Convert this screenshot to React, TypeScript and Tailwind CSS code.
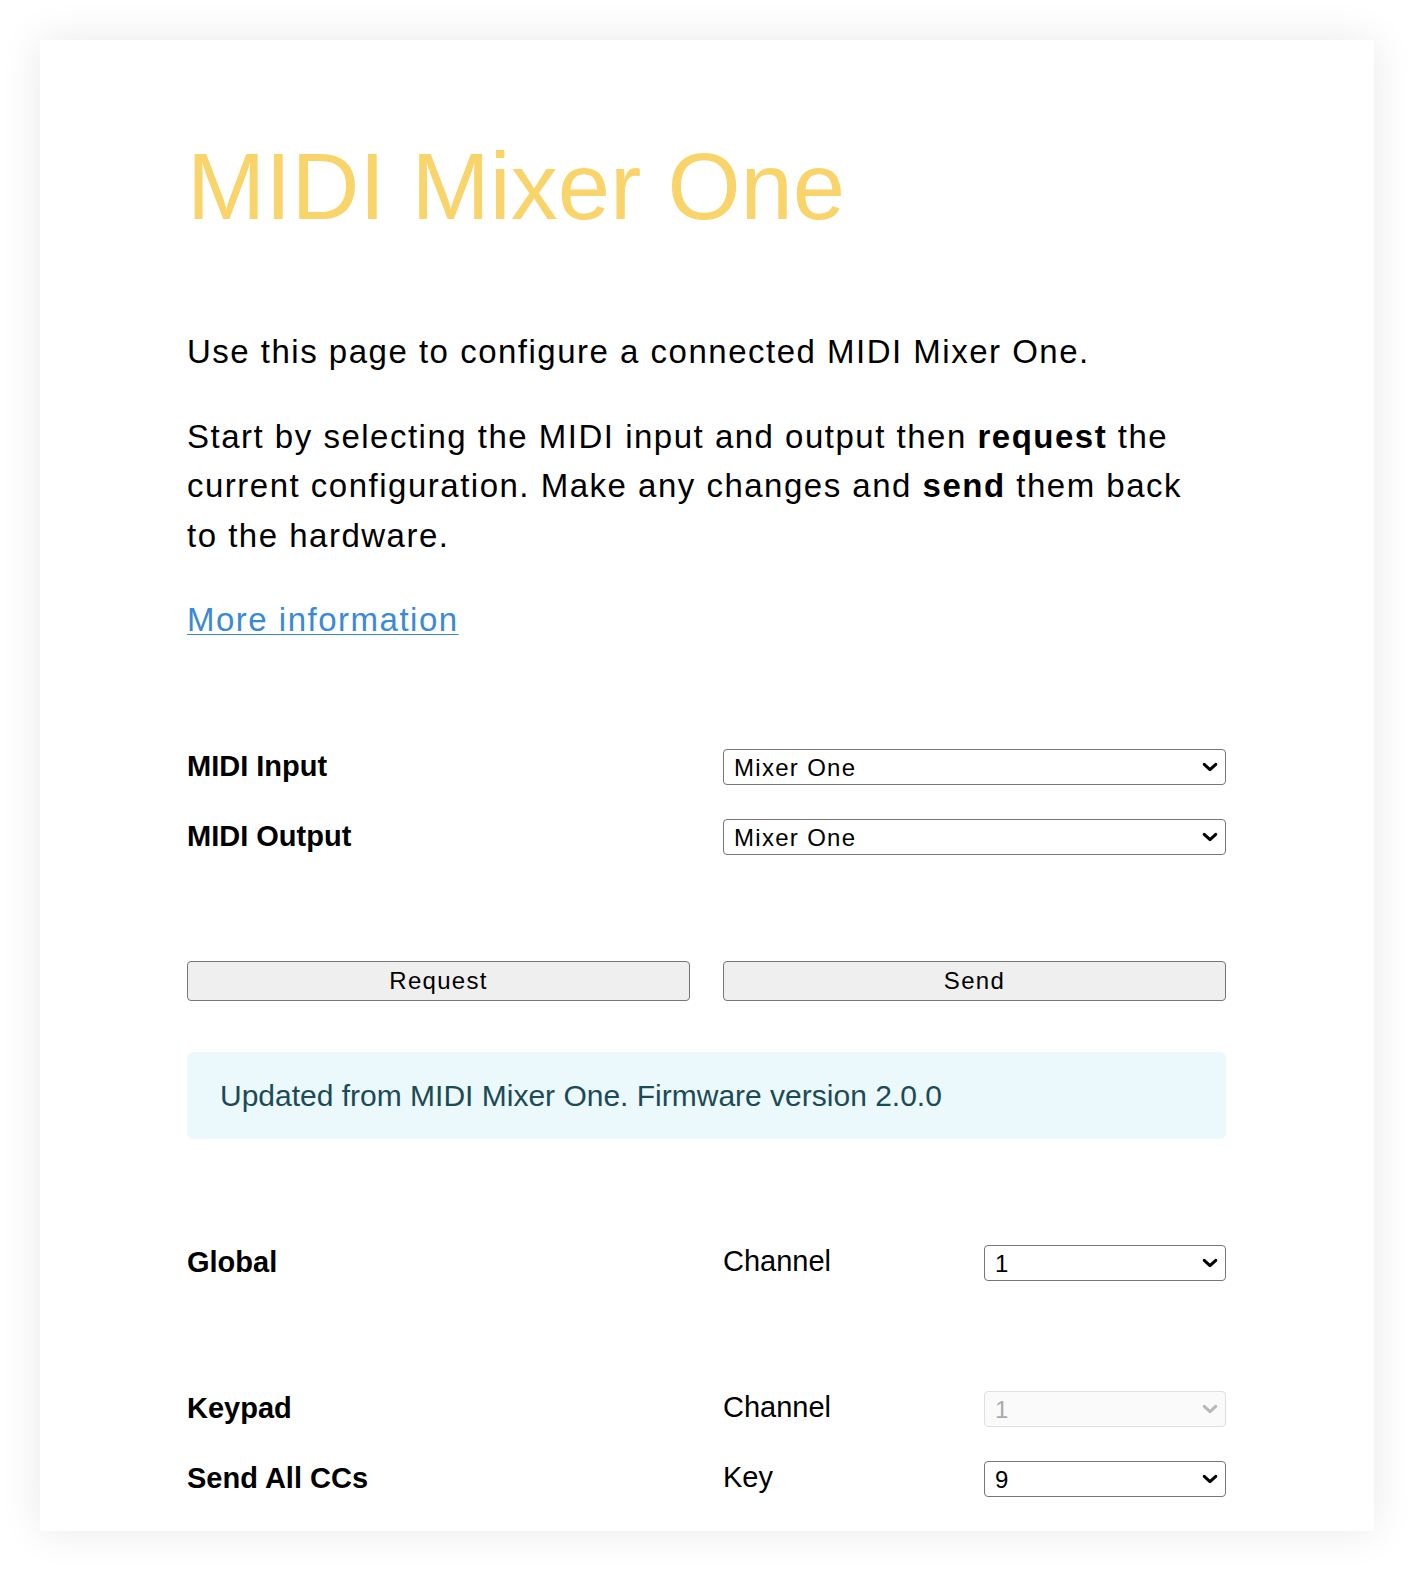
import type { ReactNode } from 'react'

const font = { fontFamily: '"Liberation Sans", Arial, sans-serif' }

function Chevron({ disabled }: { disabled?: boolean }) {
  return (
    <svg
      viewBox="0 0 18 11"
      className="pointer-events-none absolute right-[8px] top-1/2 h-[10px] w-[16px] -translate-y-1/2"
      fill="none"
      stroke={disabled ? '#b8b8b8' : '#000'}
      strokeWidth="3.4"
      strokeLinecap="round"
      strokeLinejoin="round"
    >
      <path d="M2.5 2.5 L9 8.5 L15.5 2.5" />
    </svg>
  )
}

function Select({ value, options, disabled }: { value: string; options: string[]; disabled?: boolean }) {
  return (
    <div className="relative h-[36px] w-full">
      <select
        defaultValue={value}
        disabled={disabled}
        className={
          disabled
            ? 'h-full w-full appearance-none rounded-[4px] border border-[#e0e0e0] bg-[#fafafa] pl-[10px] text-[24px] tracking-[1.3px] text-[#ababab] outline-none'
            : 'h-full w-full appearance-none rounded-[4px] border border-[#767676] bg-white pl-[10px] text-[24px] tracking-[1.3px] text-black outline-none'
        }
        style={font}
      >
        {options.map((option) => (
          <option key={option} value={option}>
            {option}
          </option>
        ))}
      </select>
      <Chevron disabled={disabled} />
    </div>
  )
}

function Label({ children }: { children: ReactNode }) {
  return <div className="flex h-[36px] items-center text-[29px] font-bold text-black">{children}</div>
}

function SettingRow({ label, field, value, options, disabled }: { label: string; field: string; value: string; options: string[]; disabled?: boolean }) {
  return (
    <>
      <Label>{label}</Label>
      <div className="flex h-[36px] items-center justify-between">
        <span className="-mt-[3px] text-[29px] leading-none text-black">{field}</span>
        <div className="w-[242px]">
          <Select value={value} options={options} disabled={disabled} />
        </div>
      </div>
    </>
  )
}

const channels = Array.from({ length: 16 }, (_, index) => String(index + 1))

function App() {
  return (
    <div className="min-h-screen bg-white px-[40px] py-[40px]" style={font}>
      <main className="bg-white pb-[34px] pl-[147px] pr-[148px] pt-[100px] shadow-[0_0_40px_rgba(0,0,0,0.09)]">
        <h1 className="text-[94px] font-normal leading-[94px] text-[#f8d46b]">MIDI Mixer One</h1>

        <p className="mt-[93px] text-[33px] leading-[49.5px] tracking-[1.5px] text-black">
          Use this page to configure a connected MIDI Mixer One.
        </p>
        <p className="mt-[35px] text-[33px] leading-[49.5px] tracking-[1.5px] text-black">
          Start by selecting the MIDI input and output then <b>request</b> the
          <br />
          current configuration. Make any changes and <b>send</b> them back
          <br />
          to the hardware.
        </p>
        <p className="mt-[35px] text-[33px] leading-[49.5px] tracking-[1.5px]">
          <a href="#info" className="text-[#3a8ad6] underline decoration-1 underline-offset-[3px]">
            More information
          </a>
        </p>

        <section className="mt-[104px] grid grid-cols-2 gap-x-[33px] gap-y-[34px]">
          <Label>MIDI Input</Label>
          <Select value="Mixer One" options={['Mixer One']} />
          <Label>MIDI Output</Label>
          <Select value="Mixer One" options={['Mixer One']} />
        </section>

        <section className="mt-[106px] grid grid-cols-2 gap-x-[33px]">
          <button
            type="button"
            className="h-[40px] rounded-[4px] border border-[#767676] bg-[#efefef] text-[24px] tracking-[1.3px] text-black"
            style={font}
          >
            Request
          </button>
          <button
            type="button"
            className="h-[40px] rounded-[4px] border border-[#767676] bg-[#efefef] text-[24px] tracking-[1.3px] text-black"
            style={font}
          >
            Send
          </button>
        </section>

        <div className="mt-[51px] flex h-[87px] items-center rounded-[6px] bg-[#ebf9fd] px-[33px] text-[30px] text-[#1c4a56]">
          Updated from MIDI Mixer One. Firmware version 2.0.0
        </div>

        <section className="mt-[106px] grid grid-cols-2 gap-x-[33px]">
          <SettingRow label="Global" field="Channel" value="1" options={channels} />
        </section>

        <section className="mt-[110px] grid grid-cols-2 gap-x-[33px] gap-y-[34px]">
          <SettingRow label="Keypad" field="Channel" value="1" options={channels} disabled />
          <SettingRow label="Send All CCs" field="Key" value="9" options={['9']} />
        </section>
      </main>
    </div>
  )
}

export default App
